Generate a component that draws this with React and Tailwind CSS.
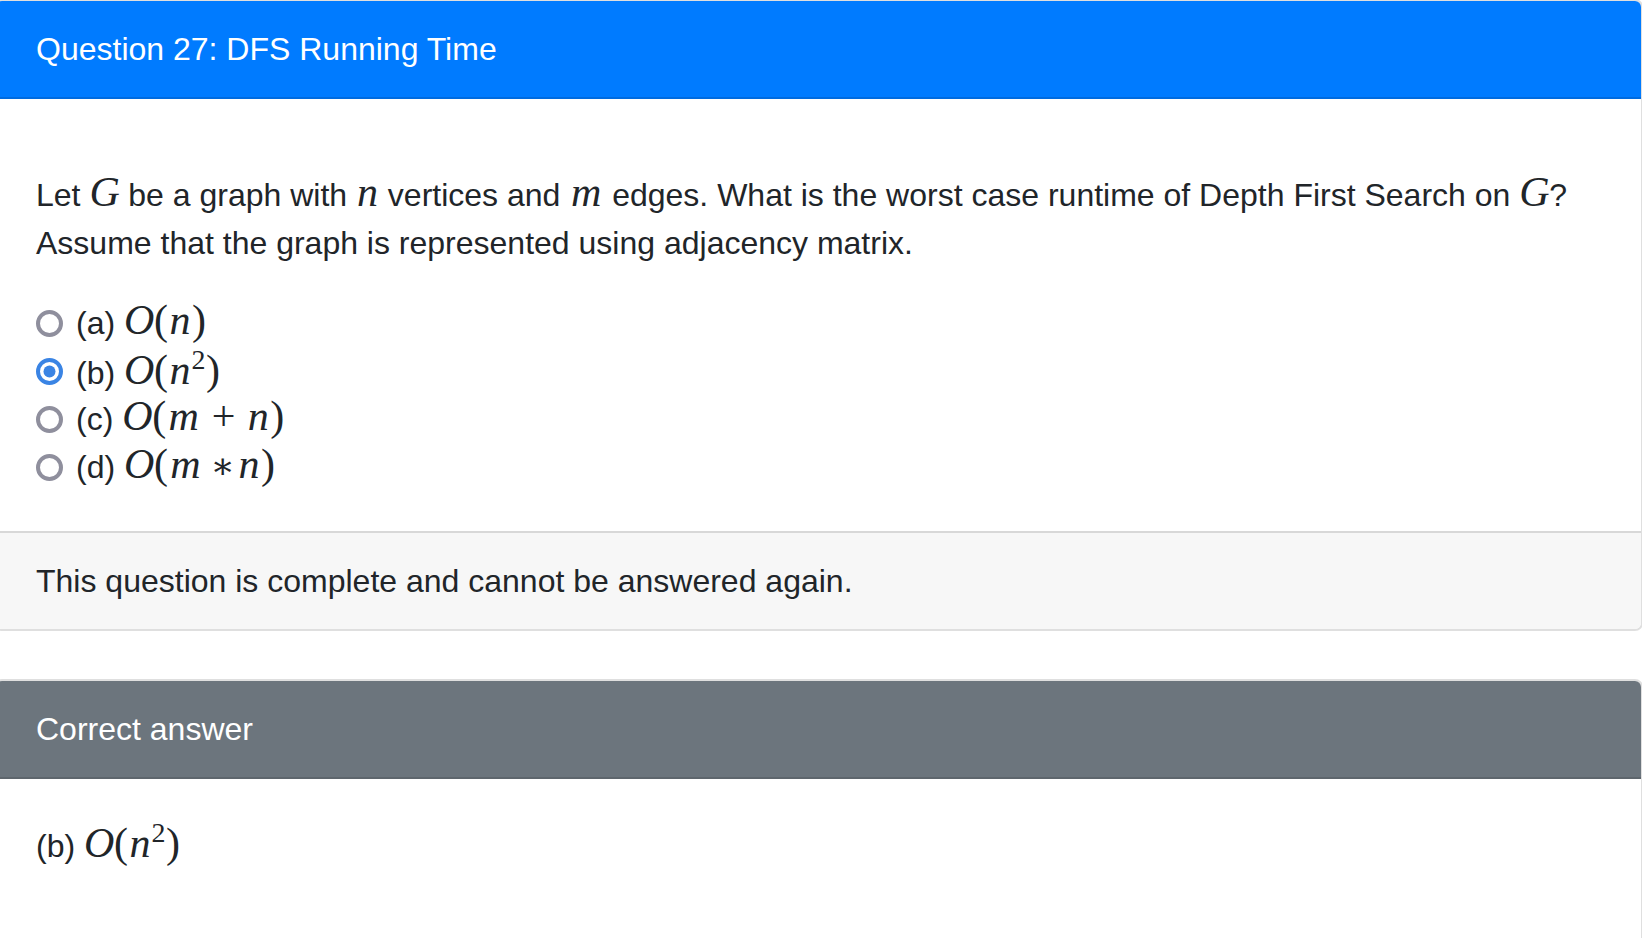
import React from 'react';

function G({ w, it, children }) {
  return (
    <span className={`inline-block text-center ${w} ${it ? 'italic' : 'not-italic'}`}>
      {children}
    </span>
  );
}

/** Обёртка формулы */
function M({ children }) {
  return (
    <span className="font-['Liberation_Serif',serif] text-[42px] leading-none whitespace-nowrap">
      {children}
    </span>
  );
}

function Sq() {
  return (
    <span className="inline-block text-[28px] leading-none align-[15px] w-[14px] text-center">2</span>
  );
}

function Radio({ checked }) {
  if (checked) {
    return (
      <svg width="27" height="27" viewBox="0 0 27 27" className="shrink-0">
        <circle cx="13.5" cy="13.5" r="11.5" fill="white" stroke="#3a84e4" strokeWidth="4" />
        <circle cx="13.5" cy="13.5" r="6" fill="#3a84e4" />
      </svg>
    );
  }
  return (
    <svg width="27" height="27" viewBox="0 0 27 27" className="shrink-0">
      <circle cx="13.5" cy="13.5" r="11.5" fill="white" stroke="#8f8f9d" strokeWidth="4" />
    </svg>
  );
}

const On = () => <G w="w-[29.5px]" it>O</G>;
const Lp = () => <G w="w-[15px]">(</G>;
const Rp = () => <G w="w-[15px]">)</G>;
const N = () => <G w="w-[23px]" it>n</G>;
const Mm = () => <G w="w-[34px]" it>m</G>;
const Gg = () => <G w="w-[30px]" it>G</G>;

const options = [
  {
    key: 'a',
    math: (<M><On /><Lp /><N /><Rp /></M>),
  },
  {
    key: 'b',
    checked: true,
    math: (<M><On /><Lp /><N /><Sq /><Rp /></M>),
  },
  {
    key: 'c',
    math: (
      <M>
        <On /><Lp /><Mm />
        <G w="w-[30px] mx-[8px]">+</G>
        <N /><Rp />
      </M>
    ),
  },
  {
    key: 'd',
    math: (
      <M>
        <On /><Lp /><Mm />
        <span className="inline-block w-[19px] mx-[8px] text-center font-['DejaVu_Serif',serif] text-[36px]">∗</span>
        <N /><Rp />
      </M>
    ),
  },
];

export default function App() {
  return (
    <div className="h-[938px] bg-white text-[#212529] font-['Liberation_Sans',Arial,sans-serif] text-[32px] leading-[48px] overflow-hidden">
      <div className="-ml-[6px] -mt-px w-[calc(100%+7px)]">
        {/* Карточка вопроса */}
        <section className="rounded-[8px] border-2 border-black/[0.125] overflow-hidden">
          <div className="bg-[#007bff] text-white px-[40px] py-[24px] border-b-2 border-black/[0.125]">
            Question 27: DFS Running Time
          </div>
          <div className="px-[40px] pt-[72px] pb-[40px]">
            <p className="mb-[32px]">
              Let <M><Gg /></M> be a graph with <M><N /></M> vertices and{' '}
              <M><Mm /></M> edges. What is the worst case runtime of Depth First Search on{' '}
              <M><Gg /></M>?
              <br />
              Assume that the graph is represented using adjacency matrix.
            </p>
            <div className="flex flex-col">
              {options.map((o) => (
                <div key={o.key} className="flex items-center h-[48px]">
                  <Radio checked={o.checked} />
                  <span className="ml-[13px]">
                    ({o.key}) {o.math}
                  </span>
                </div>
              ))}
            </div>
          </div>
          <div className="bg-[#f7f7f7] px-[40px] py-[24px] border-t-2 border-black/[0.125]">
            This question is complete and cannot be answered again.
          </div>
        </section>

        {/* Правильный ответ */}
        <section className="mt-[48px] rounded-[8px] border-2 border-black/[0.125] overflow-hidden">
          <div className="bg-[#6c757d] text-white px-[40px] py-[24px] border-b-2 border-black/[0.125]">
            Correct answer
          </div>
          <div className="px-[40px] pt-[40px] pb-[120px]">
            (b) <M><On /><Lp /><N /><Sq /><Rp /></M>
          </div>
        </section>
      </div>
    </div>
  );
}
